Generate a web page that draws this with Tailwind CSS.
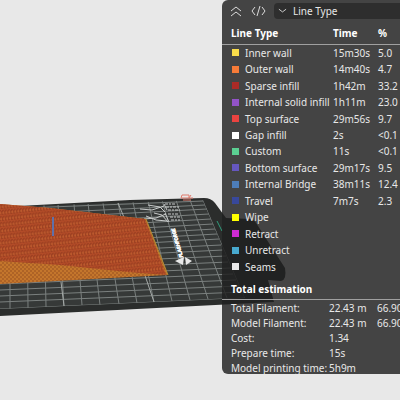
<!DOCTYPE html>
<html lang="en">
<head>
    <meta charset="UTF-8">
    <meta name="viewport" content="width=device-width, initial-scale=1.0">
    <title>Slice Preview</title>
    <script src="https://cdn.jsdelivr.net/npm/@tailwindcss/browser@4"></script>
</head>
<body class="bg-[#e8e8e8] font-['Noto_Sans',sans-serif] text-[10px] leading-4 text-[#e8e8e8]">
    <main class="relative min-h-screen overflow-hidden">
        <!-- Build plate and model -->
        <svg class="absolute top-0 left-0" width="400" height="400" viewBox="0 0 400 400">
            <defs>
                <pattern id="infill" width="3" height="6" patternUnits="userSpaceOnUse" patternTransform="rotate(-6)">
                    <rect width="3" height="6" fill="#b34c28"/>
                    <path d="M1 0v4M2 5v1" stroke="#8a361c" stroke-width="1"/>
                    <path d="M2 1v2" stroke="#c96833" stroke-width="1"/>
                </pattern>
                <pattern id="wall" width="4" height="4" patternUnits="userSpaceOnUse">
                    <rect width="4" height="4" fill="#c4762c"/>
                    <path d="M0 1h2M2 3h2" stroke="#99501f" stroke-width="1"/>
                </pattern>
                <clipPath id="bed">
                    <path d="M0 207L203 200L245 298L0 309Z"/>
                </clipPath>
            </defs>
            <path d="M0 207L130 200L204 198Q211 198 215 203L226 218L250 219Q255 220 258 226L285 268Q287 280 281 281L268 280L274 302L0 316Z" fill="#2b2d2c"/>
            <path d="M0 207L203 200L245 298L0 309Z" fill="#363938"/>
            <g clip-path="url(#bed)" stroke="#7b807f" stroke-width="1" fill="none">
                <path d="M0 309L245 298M0 302L242 292M0 296L239 286M0 290L236 280M0 284L233 274M0 278L231 268M0 272L228 262M0 266L226 256M0 261L223 250M0 256L221 245M0 251L219 239M0 246L217 234M0 241L215 229M0 236L213 224M0 231L211 219M0 226L209 214M0 220L207 209M0 215L205 205M0 209L203 201"/>
                <path d="M203 200L245 298M190 200L227 298M176 200L208 299M162 200L190 300M148 201L172 301M133 202L154 302M118 202L137 303M103 203L119 304M88 203L100 305M74 204L82 305M58 204L64 306M44 205L46 307M27 205L28 308M10 205L10 309"/>
            </g>
            <path d="M118 203L126 222M133 240L154 302M61 282L64 306" stroke="#a5aaa8" stroke-width="1"/>
            <path d="M217 221L222 231" stroke="#2f9c7c" stroke-width="1"/>
            <!-- Plate markings -->
            <g stroke="#c9cccb" fill="none" stroke-width="1">
                <path d="M140 209l12 1 12-4M148 205l12 2 5 5M144 219l12-1 10-4M154 213l8 2 6 7M146 216l10 4 11 1M164 204l3 6M165 213l4 9"/>
                <path d="M165 204h11M166 207h13M168 210h12M168 214h10M170 217h10M171 220h9" stroke-width="1" stroke-dasharray="3 1 2 1"/>
            </g>
            <path d="M182 195h7v3h-8zM191 195l-2 3h4M183 200h8" fill="none" stroke="#e07b6c" stroke-width="1"/>
            <text transform="translate(183 257) rotate(-106)" font-family="Roboto, sans-serif" font-size="5" font-weight="700" font-style="italic" fill="#fff" stroke="#fff" stroke-width="0.5">FLASHFORGE</text>
            <path d="M175 261l9-4-1 8zM185 257l7 4-6 4z" fill="#e9e9e9"/>
            <!-- Sliced model -->
            <path d="M0 204L50 208L146 219L168 275L0 284Z" fill="url(#wall)"/>
            <path d="M0 204L50 208L145 219L166 275L128 272L60 265L0 261Z" fill="url(#infill)"/>
            <path d="M146 219L168 275" stroke="#b08a35" stroke-width="1"/>
            <path d="M53 217V236" stroke="#6070a8" stroke-width="2"/>
        </svg>

        <!-- Legend panel -->
        <section class="relative ml-auto h-[374px] w-[178px] overflow-hidden rounded-l-md bg-[#202020]/82 whitespace-nowrap">
            <div class="flex h-[22px] items-center pl-2">
                <button type="button" aria-label="Collapse">
                    <svg width="12" height="12" viewBox="0 0 12 12" fill="none" stroke="#dcdcdc" stroke-width="1"><path d="M1 6L6 2L11 6M1 11L6 7L11 11"/></svg>
                </button>
                <button type="button" aria-label="Show G-code" class="ml-[9px]">
                    <svg width="15" height="12" viewBox="0 0 15 12" fill="none" stroke="#dcdcdc" stroke-width="1"><path d="M4 2L1 6L4 10M11 2L14 6L11 10M9 1L6 11"/></svg>
                </button>
                <label class="ml-2 flex h-4 flex-1 items-center rounded-l-sm bg-[#2e2e2e] pl-1">
                    <svg width="9" height="6" viewBox="0 0 10 6" fill="none" stroke="#dcdcdc" stroke-width="1"><path d="M1 1L5 4L9 1"/></svg>
                    <select aria-label="Color scheme" class="ml-[6px] h-4 flex-1 appearance-none bg-transparent leading-4">
                        <option>Line Type</option>
                    </select>
                </label>
            </div>

            <table class="h-[253px] w-full table-fixed border-collapse text-left">
                <thead>
                    <tr class="h-[22px] border-b border-[#a0a0a0] text-white">
                        <th class="w-[111px] p-0 pl-[9px] font-bold">Line Type</th>
                        <th class="w-[45px] p-0 font-bold">Time</th>
                        <th class="p-0 font-bold">%</th>
                    </tr>
                </thead>
                <tbody id="legend"></tbody>
            </table>

            <h2 class="flex h-[25px] items-center border-b border-[#a0a0a0] pt-1 pl-[9px] font-bold text-white">Total estimation</h2>
            <table class="mt-px w-full table-fixed border-collapse text-left leading-[15px]">
                <tbody>
                    <tr><th class="w-[107px] p-0 pl-[9px] font-normal">Total Filament:</th><td class="w-[48px] p-0">22.43 m</td><td class="p-0">66.90</td></tr>
                    <tr><th class="p-0 pl-[9px] font-normal">Model Filament:</th><td class="p-0">22.43 m</td><td class="p-0">66.90</td></tr>
                    <tr><th class="p-0 pl-[9px] font-normal">Cost:</th><td class="p-0">1.34</td><td class="p-0"></td></tr>
                    <tr><th class="p-0 pl-[9px] font-normal">Prepare time:</th><td class="p-0">15s</td><td class="p-0"></td></tr>
                    <tr><th class="p-0 pl-[9px] font-normal">Model printing time:</th><td class="p-0">5h9m</td><td class="p-0"></td></tr>
                </tbody>
            </table>
        </section>
    </main>

    <script>
        const lines = [
            ['#f9dc4a', 'Inner wall', '15m30s', '5.0'],
            ['#f67b38', 'Outer wall', '14m40s', '4.7'],
            ['#aa2b26', 'Sparse infill', '1h42m', '33.2'],
            ['#9253c8', 'Internal solid infill', '1h11m', '23.0'],
            ['#ea4340', 'Top surface', '29m56s', '9.7'],
            ['#ffffff', 'Gap infill', '2s', '<0.1'],
            ['#5bcf92', 'Custom', '11s', '<0.1'],
            ['#6657c0', 'Bottom surface', '29m17s', '9.5'],
            ['#4d7db8', 'Internal Bridge', '38m11s', '12.4'],
            ['#38489b', 'Travel', '7m7s', '2.3'],
            ['#ffff00', 'Wipe', '', ''],
            ['#cf2bd3', 'Retract', '', ''],
            ['#48a9cf', 'Unretract', '', ''],
            ['#e8e8e8', 'Seams', '', ''],
        ];

        const legend = document.getElementById('legend');
        lines.forEach(([color, name, time, percent]) => {
            const row = legend.insertRow();
            const label = row.insertCell();
            label.className = 'p-0 pl-[10px]';
            label.innerHTML = '<div class="flex items-center gap-[6px]"><i class="size-[7px] shrink-0"></i><span></span></div>';
            label.querySelector('i').style.backgroundColor = color;
            label.querySelector('span').textContent = name;
            [time, percent].forEach((value) => {
                const cell = row.insertCell();
                cell.className = 'p-0';
                cell.textContent = value;
            });
        });
    </script>
</body>
</html>
